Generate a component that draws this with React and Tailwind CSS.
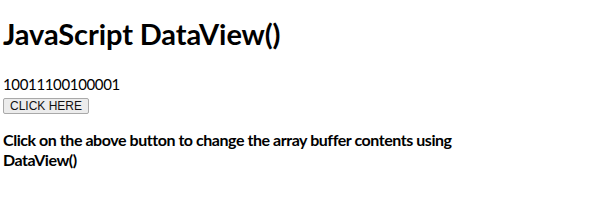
import React, { useState } from 'react';

export default function App() {
    const [value, setValue] = useState('10011100100001');

    return (
        <div className="w-[600px] h-[211px] bg-white text-black pl-[3px] pt-[16px] font-['Lato','Open_Sans',sans-serif]">
            <h1 className="text-[29px] leading-[36px] font-bold tracking-[-0.1px]">JavaScript DataView()</h1>
            <div className="mt-[23px] text-[15px] leading-[18px] tracking-[-0.35px]">{value}</div>
            <button
                onClick={() => setValue('10011100100001')}
                className="mt-[5px] block h-[16px] px-[6px] text-[12px] leading-[14px] text-[#111] font-['Liberation_Sans',Arial,sans-serif] bg-[#ececec] border border-[#a9a9a9] rounded-[2px]"
            >
                CLICK HERE
            </button>
            <p className="mt-[16px] text-[16px] leading-[20px] font-bold w-[480px] tracking-[-0.45px]">
                Click on the above button to change the array buffer contents using DataView()
            </p>
        </div>
    );
}
